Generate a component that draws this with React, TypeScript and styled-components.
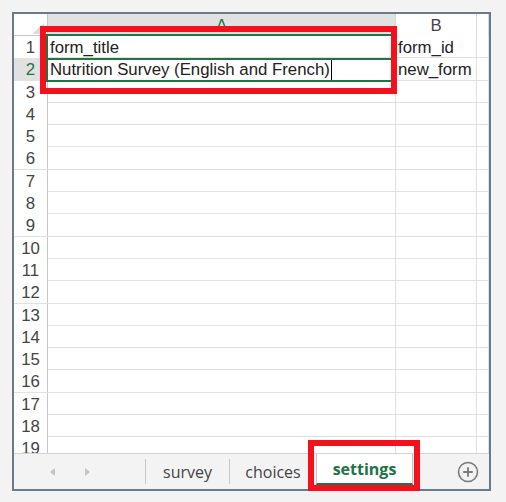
import styled, { createGlobalStyle } from "styled-components";

const GlobalStyle = createGlobalStyle`
  html, body {
    margin: 0;
    padding: 0;
    background: #f3f3f3;
  }
`;

interface SheetRow {
  a?: string;
  b?: string;
  caret?: boolean;
}

const data: SheetRow[] = [
  { a: "form_title", b: "form_id" },
  { a: "Nutrition Survey (English and French)", b: "new_form", caret: true },
];

const rowNumbers = Array.from({ length: 19 }, (_, i) => i + 1);

const App = () => {
  return (
    <Page>
      <GlobalStyle />
      <Frame>
        <Sheet>
          <HeaderRow>
            <Corner />
            <ColHead $active>A</ColHead>
            <ColHead>B</ColHead>
            <ColHead />
          </HeaderRow>
          {rowNumbers.map((n) => {
            const row = data[n - 1];
            return (
              <GridRow key={n}>
                <RowHead $active={n === 2}>{n}</RowHead>
                <Cell>
                  {row?.a}
                  {row?.caret && <Caret />}
                </Cell>
                <Cell>{row?.b}</Cell>
                <Cell />
              </GridRow>
            );
          })}
          <Selection />
        </Sheet>
        <TabBar>
          <TabNav>
            <ArrowLeft />
            <ArrowRight />
          </TabNav>
          <TabDivider />
          <Tab $width={83}>survey</Tab>
          <TabDivider />
          <Tab $width={86}>choices</Tab>
          <ActiveTab>settings</ActiveTab>
          <Spacer />
          <AddSheet>
            <svg width="22" height="22" viewBox="0 0 22 22">
              <circle cx="11" cy="11" r="9.5" fill="none" stroke="#7a7a7a" strokeWidth="1.6" />
              <path d="M11 6.2v9.6M6.2 11h9.6" stroke="#7a7a7a" strokeWidth="1.8" />
            </svg>
          </AddSheet>
        </TabBar>
      </Frame>
      <Callout $x={40} $y={26} $w={357} $h={68} />
      <Callout $x={308} $y={440} $w={112} $h={51} />
    </Page>
  );
};

const Page = styled.div`
  position: relative;
  width: 506px;
  height: 502px;
  padding: 12px;
  box-sizing: border-box;
  background: #f3f3f3;
`;

const Frame = styled.div`
  width: 479px;
  height: 479px;
  box-sizing: border-box;
  border: 2px solid #687b8d;
  background: #ffffff;
  display: flex;
  flex-direction: column;
`;

// grid
const Sheet = styled.div`
  position: relative;
  height: 439px;
  overflow: hidden;
  font-family: "Liberation Sans", Arial, sans-serif;
  font-size: 16.8px;
  color: #222;
`;

const columns = "34px 348px 81px 1fr";

const HeaderRow = styled.div`
  display: grid;
  grid-template-columns: ${columns};
  height: 22px;
  box-sizing: border-box;
  border-bottom: 1px solid #c6c6c6;
`;

const Corner = styled.div`
  position: relative;
  border-right: 1px solid #c6c6c6;
  &::after {
    content: "";
    position: absolute;
    right: 3px;
    bottom: 2px;
    border-left: 12px solid transparent;
    border-bottom: 11px solid #dcdcdc;
  }
`;

const ColHead = styled.div<{ $active?: boolean }>`
  display: flex;
  align-items: center;
  justify-content: center;
  padding-top: 1px;
  border-right: 1px solid #d8d8d8;
  background: ${(p) => (p.$active ? "#e1e1e1" : "#ffffff")};
  color: ${(p) => (p.$active ? "#217346" : "#444")};
  line-height: 21px;
`;

const GridRow = styled.div`
  display: grid;
  grid-template-columns: ${columns};
  height: 22.3px;
  box-sizing: border-box;
  border-bottom: 1px solid #e1e1e1;
`;

const RowHead = styled.div<{ $active?: boolean }>`
  display: flex;
  align-items: center;
  justify-content: center;
  padding-top: 2px;
  border-right: 1px solid #c6c6c6;
  background: ${(p) => (p.$active ? "#e1e1e1" : "#ffffff")};
  color: ${(p) => (p.$active ? "#217346" : "#444")};
  line-height: 20px;
`;

const Cell = styled.div`
  display: flex;
  align-items: center;
  padding: 2px 0 0 2px;
  border-right: 1px solid #e1e1e1;
  white-space: nowrap;
  overflow: hidden;
  line-height: 20px;
`;

const Caret = styled.span`
  display: inline-block;
  width: 1px;
  height: 20px;
  margin-left: 1px;
  background: #000;
`;

const Selection = styled.div`
  position: absolute;
  left: 32px;
  top: 20px;
  width: 350px;
  height: 48px;
  box-sizing: border-box;
  border: 2px solid #217346;
  pointer-events: none;
  &::after {
    content: "";
    position: absolute;
    left: 0;
    right: 0;
    top: 22px;
    height: 2px;
    background: #217346;
  }
  &::before {
    content: "";
    position: absolute;
    right: -4px;
    bottom: -4px;
    width: 5px;
    height: 5px;
    background: #217346;
    border: 1px solid #fff;
  }
`;

// sheet tabs
const TabBar = styled.div`
  flex: 1;
  display: flex;
  align-items: center;
  background: #f3f3f3;
  border-top: 1px solid #d4d4d4;
  font-family: "Open Sans", "Liberation Sans", sans-serif;
  font-size: 16px;
  color: #444;
`;

const TabNav = styled.div`
  width: 131px;
  display: flex;
  align-items: center;
  gap: 30px;
  padding-left: 36px;
  box-sizing: border-box;
`;

const ArrowLeft = styled.div`
  width: 0;
  height: 0;
  border-top: 4px solid transparent;
  border-bottom: 4px solid transparent;
  border-right: 5px solid #c4c4c4;
`;

const ArrowRight = styled.div`
  width: 0;
  height: 0;
  border-top: 4px solid transparent;
  border-bottom: 4px solid transparent;
  border-left: 5px solid #c4c4c4;
`;

const TabDivider = styled.div`
  width: 1px;
  height: 25px;
  background: #c6c6c6;
`;

const Tab = styled.div<{ $width: number }>`
  width: ${(p) => p.$width}px;
  text-align: center;
  line-height: 22px;
`;

const ActiveTab = styled.div`
  align-self: flex-start;
  width: 97px;
  height: 31px;
  box-sizing: border-box;
  display: flex;
  align-items: center;
  justify-content: center;
  background: #ffffff;
  border-left: 1px solid #c6c6c6;
  border-right: 1px solid #c6c6c6;
  border-bottom: 2px solid #217346;
  color: #217346;
  font-weight: 700;
  padding-top: 1px;
`;

const Spacer = styled.div`
  flex: 1;
`;

const AddSheet = styled.div`
  display: flex;
  margin-right: 10px;
  margin-top: 1px;
`;

// annotation boxes
const Callout = styled.div<{ $x: number; $y: number; $w: number; $h: number }>`
  position: absolute;
  left: ${(p) => p.$x}px;
  top: ${(p) => p.$y}px;
  width: ${(p) => p.$w}px;
  height: ${(p) => p.$h}px;
  box-sizing: border-box;
  border: 6px solid #f5101e;
  pointer-events: none;
`;

export default App;
